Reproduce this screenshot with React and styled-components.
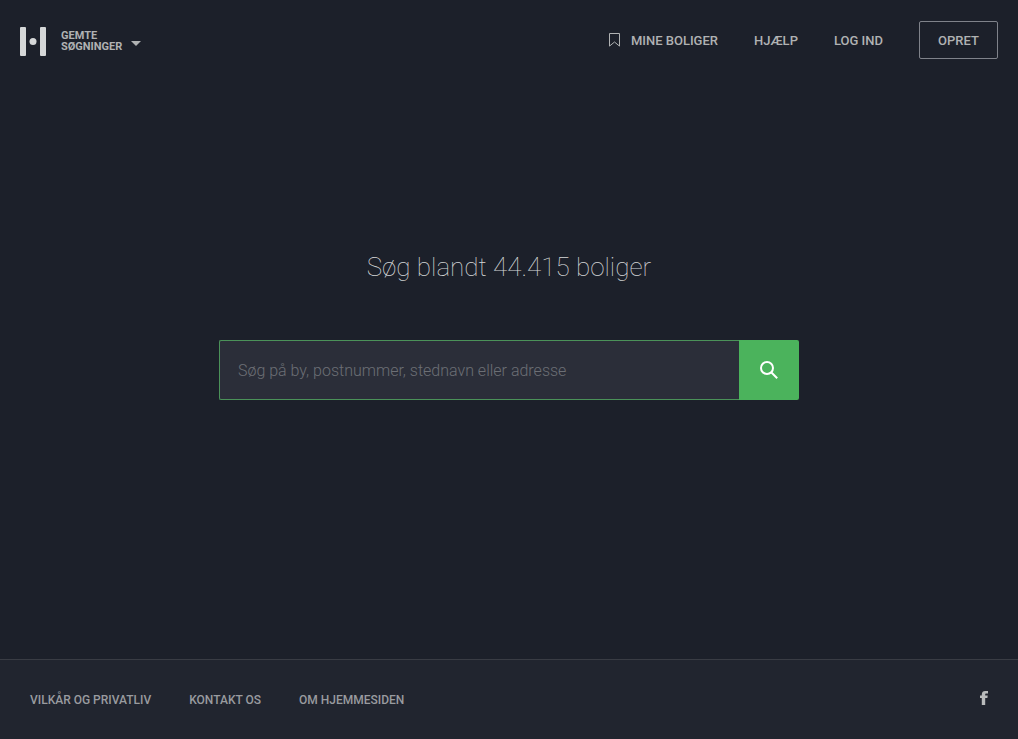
import React from "react";
import styled, { createGlobalStyle } from "styled-components";

const GlobalStyle = createGlobalStyle`
  *, *::before, *::after { box-sizing: border-box; }
  html, body { margin: 0; background: #1c202a; }
  body, button, input { font-family: Roboto, "Liberation Sans", sans-serif; }
`;

const Page = styled.div`
  display: flex;
  flex-direction: column;
  min-height: 100vh;
`;

const Header = styled.header`
  display: flex;
  align-items: center;
  justify-content: space-between;
  padding: 21px 20px;
`;

const Brand = styled.div`
  display: flex;
  align-items: center;
  gap: 15px;
  padding-top: 2px;
`;

const LogoLink = styled.a`
  display: block;
  height: 30px;
`;

const SavedButton = styled.button`
  display: flex;
  align-items: flex-end;
  gap: 9px;
  padding: 0;
  border: 0;
  background: none;
  color: #b0b2b3;
  font-size: 11px;
  font-weight: 700;
  line-height: 11px;
  text-align: left;
  text-transform: uppercase;
  cursor: pointer;
`;

const SavedLabel = styled.span`
  display: flex;
  flex-direction: column;
`;

const Caret = styled.svg`
  display: block;
  margin-bottom: 6px;
`;

const Nav = styled.nav`
  display: flex;
  align-items: center;
  gap: ${({ $wide }) => ($wide ? "38px" : "36px")};
`;

const NavLink = styled.a`
  display: flex;
  align-items: center;
  gap: 11px;
  color: ${({ $small }) => ($small ? "#999b9f" : "#b0b2b3")};
  font-size: ${({ $small }) => ($small ? "12px" : "13px")};
  font-weight: 500;
  line-height: 15px;
  text-decoration: none;
  text-transform: uppercase;
`;

const SignUpButton = styled.button`
  height: 38px;
  padding: 0 17px;
  min-width: 79px;
  border: 1px solid #7f828a;
  border-radius: 2px;
  background: none;
  color: #b0b2b3;
  font-size: 13px;
  font-weight: 500;
  text-transform: uppercase;
  cursor: pointer;
`;

const Main = styled.main`
  flex: 1;
  display: flex;
  flex-direction: column;
  align-items: center;
  justify-content: center;
  padding: 0 20px 88px;
`;

const Title = styled.h1`
  margin: 0 0 57px;
  color: #d5d7d8;
  font-size: 26px;
  font-weight: 100;
  line-height: 32px;
`;

const SearchForm = styled.form`
  display: flex;
  width: 100%;
  max-width: 580px;
  height: 60px;
`;

const SearchInput = styled.input`
  flex: 1;
  min-width: 0;
  padding: 0 18px;
  border: 1px solid #4b9259;
  border-right: 0;
  border-radius: 2px 0 0 2px;
  outline: 0;
  background: #2b2e39;
  color: #d5d7d8;
  font-size: 16px;
  font-weight: 300;

  &::placeholder { color: #6c6f75; opacity: 1; }
`;

const SearchButton = styled.button`
  display: flex;
  align-items: center;
  justify-content: center;
  width: 60px;
  padding: 0;
  border: 0;
  border-radius: 0 2px 2px 0;
  background: #4bb35c;
  color: #fff;
  cursor: pointer;
`;

const Footer = styled.footer`
  display: flex;
  align-items: center;
  justify-content: space-between;
  min-height: 80px;
  padding: 2px 30px 0;
  border-top: 1px solid #393c44;
  background: #21252f;
`;

const SocialLink = styled.a`
  display: block;
  padding-bottom: 2px;
  color: #b9bbbc;
`;

export default function App() {
  return (
    <Page>
      <GlobalStyle />
      <Header>
        <Brand>
          <LogoLink href="#" aria-label="Forside">
            <svg width="26" height="30" viewBox="0 0 26 30" fill="#d5d7d8">
              <rect x="0" y="1" width="6" height="29" rx="1" />
              <rect x="20" y="1" width="6" height="29" rx="1" />
              <circle cx="13" cy="15.5" r="3.5" />
            </svg>
          </LogoLink>
          <SavedButton type="button">
            <SavedLabel>
              <span>Gemte</span>
              <span>søgninger</span>
            </SavedLabel>
            <Caret width="10" height="5" viewBox="0 0 10 5" aria-hidden="true">
              <path d="M0 0h10L5 5z" fill="#b0b2b3" />
            </Caret>
          </SavedButton>
        </Brand>
        <Nav>
          <NavLink href="#">
            <svg width="11" height="14" viewBox="0 0 11 14" fill="none" stroke="#b0b2b3" aria-hidden="true">
              <path d="M.5 .5h10v12.6l-5-4.1-5 4.1z" />
            </svg>
            Mine boliger
          </NavLink>
          <NavLink href="#">Hjælp</NavLink>
          <NavLink href="#">Log ind</NavLink>
          <SignUpButton type="button">Opret</SignUpButton>
        </Nav>
      </Header>
      <Main>
        <Title>Søg blandt 44.415 boliger</Title>
        <SearchForm role="search" onSubmit={(e) => e.preventDefault()}>
          <SearchInput
            type="text"
            aria-label="Søg"
            placeholder="Søg på by, postnummer, stednavn eller adresse"
          />
          <SearchButton type="submit" aria-label="Søg">
            <svg width="18" height="18" viewBox="0 0 18 18" fill="none" stroke="currentColor" strokeWidth="2">
              <circle cx="7" cy="7" r="6" />
              <path d="M11.200 11.200l6 6" />
            </svg>
          </SearchButton>
        </SearchForm>
      </Main>
      <Footer>
        <Nav $wide>
          <NavLink $small href="#">Vilkår og privatliv</NavLink>
          <NavLink $small href="#">Kontakt os</NavLink>
          <NavLink $small href="#">Om hjemmesiden</NavLink>
        </Nav>
        <SocialLink href="#" aria-label="Facebook">
          <svg width="8" height="14" viewBox="0 0 8 14" fill="currentColor">
            <path d="M1.800 14V7H0V4.600h1.800V3.400C1.800 1.200 3.200 0 5.200 0H8v2.400H6.300C5.500 2.400 5.200 2.700 5.200 3.400v1.200h2.500L7.400 7H5.200v7z" />
          </svg>
        </SocialLink>
      </Footer>
    </Page>
  );
}
